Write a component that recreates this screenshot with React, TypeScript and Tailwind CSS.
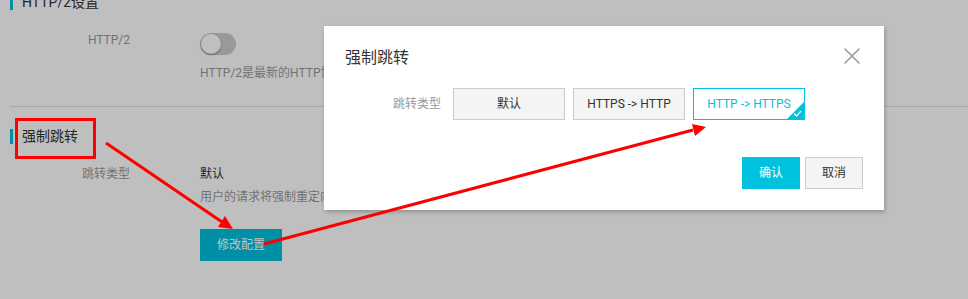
import { X } from "lucide-react";

const font = "font-['Roboto','Noto_Sans_CJK_SC',sans-serif]";

function SettingsPage() {
  return (
    <div className="flex flex-col">
      {/* HTTP/2 section */}
      <div className="-mt-[5px] ml-[10px] flex h-[15px] items-center border-l-[3px] border-[#00c1de] pl-[9px] text-[14px] text-[#333]">
        HTTP/2设置
      </div>

      <div className="mt-[22px] flex">
        <div className="w-[130px] text-right text-[12px] leading-[16px] text-[#999]">HTTP/2</div>
        <div className="ml-[70px] flex flex-col">
          <div className="relative mt-[1px] h-[22px] w-[36px] rounded-full bg-[#cccccc]">
            <div className="absolute left-[1px] top-[1px] h-[20px] w-[20px] rounded-full bg-white shadow-[0_1px_2px_rgba(0,0,0,0.4)]" />
          </div>
          <div className="mt-[9px] text-[12px] leading-[18px] text-[#999]">
            HTTP/2是最新的HTTP协议，开启后可提升访问速度
          </div>
        </div>
      </div>

      <div className="ml-[10px] mt-[24px] h-px bg-[#e0e0e0]" />

      {/* Force redirect section */}
      <div className="ml-[10px] mt-[22px] flex h-[15px] items-center border-l-[3px] border-[#00c1de] pl-[9px] text-[14px] text-[#333]">
        强制跳转
      </div>

      <div className="mt-[22px] flex">
        <div className="w-[130px] text-right text-[12px] leading-[16px] text-[#999]">跳转类型</div>
        <div className="ml-[70px] flex flex-col">
          <div className="text-[12px] leading-[16px] text-[#333]">默认</div>
          <div className="mt-[6px] text-[12px] leading-[18px] text-[#999]">
            用户的请求将强制重定向
          </div>
          <button className="mt-[23px] h-[32px] w-[82px] bg-[#00c1de] text-[12px] text-white">
            修改配置
          </button>
        </div>
      </div>
    </div>
  );
}

function RedirectModal() {
  const options = ["默认", "HTTPS -> HTTP", "HTTP -> HTTPS"];
  const selected = 2;

  return (
    <div className="absolute left-[324px] top-[26px] flex h-[184px] w-[560px] flex-col bg-white shadow-[1px_2px_4px_rgba(0,0,0,0.25)]">
      <div className="flex h-[24px] items-start justify-between px-[21px] pt-[20px] box-content">
        <div className="text-[16px] leading-[24px] text-[#333]">强制跳转</div>
        <X className="-mr-[3px] -mt-[4px] h-[28px] w-[28px] text-[#999]" strokeWidth={1.3} />
      </div>

      <div className="mt-[18px] flex items-center pl-[21px]">
        <div className="w-[96px] text-right text-[12px] text-[#999]">跳转类型</div>
        <div className="ml-[12px] flex gap-[8px]">
          {options.map((opt, i) =>
            i === selected ? (
              <div
                key={opt}
                className="relative flex h-[32px] w-[112px] items-center justify-center overflow-hidden border border-[#00c1de] bg-white text-[12px] text-[#00c1de]"
              >
                {opt}
                <div className="absolute bottom-0 right-0 h-0 w-0 border-b-[17px] border-l-[17px] border-b-[#00c1de] border-l-transparent" />
                <svg className="absolute bottom-[2px] right-[2px]" width="9" height="7" viewBox="0 0 9 7">
                  <path d="M1 3.5 L3.5 6 L8 1" fill="none" stroke="white" strokeWidth="1.3" />
                </svg>
              </div>
            ) : (
              <div
                key={opt}
                className="flex h-[32px] w-[112px] items-center justify-center border border-[#cccccc] bg-[#f4f4f4] text-[12px] text-[#333]"
              >
                {opt}
              </div>
            )
          )}
        </div>
      </div>

      <div className="mt-[37px] flex justify-end gap-[5px] px-[21px]">
        <button className="h-[32px] w-[58px] bg-[#00c1de] text-[12px] text-white">确认</button>
        <button className="h-[32px] w-[58px] border border-[#cccccc] bg-[#f4f4f4] text-[12px] text-[#333]">
          取消
        </button>
      </div>
    </div>
  );
}

function Annotations() {
  return (
    <>
      <div className="absolute left-[15px] top-[118px] h-[41px] w-[81px] border-[3px] border-[#ff0000]" />
      <svg className="pointer-events-none absolute left-0 top-0" width="968" height="299">
        <line x1="106" y1="143" x2="222" y2="222" stroke="#ff0000" strokeWidth="3" />
        <polygon points="233,229 218,227 225,216" fill="#ff0000" />
        <line x1="264" y1="244" x2="693" y2="130" stroke="#ff0000" strokeWidth="3" />
        <polygon points="706,127 695,136 692,124" fill="#ff0000" />
      </svg>
    </>
  );
}

export default function App() {
  return (
    <div className={`relative h-[299px] w-[968px] overflow-hidden bg-white ${font}`}>
      <SettingsPage />
      <div className="absolute inset-0 bg-black/25" />
      <RedirectModal />
      <Annotations />
    </div>
  );
}
